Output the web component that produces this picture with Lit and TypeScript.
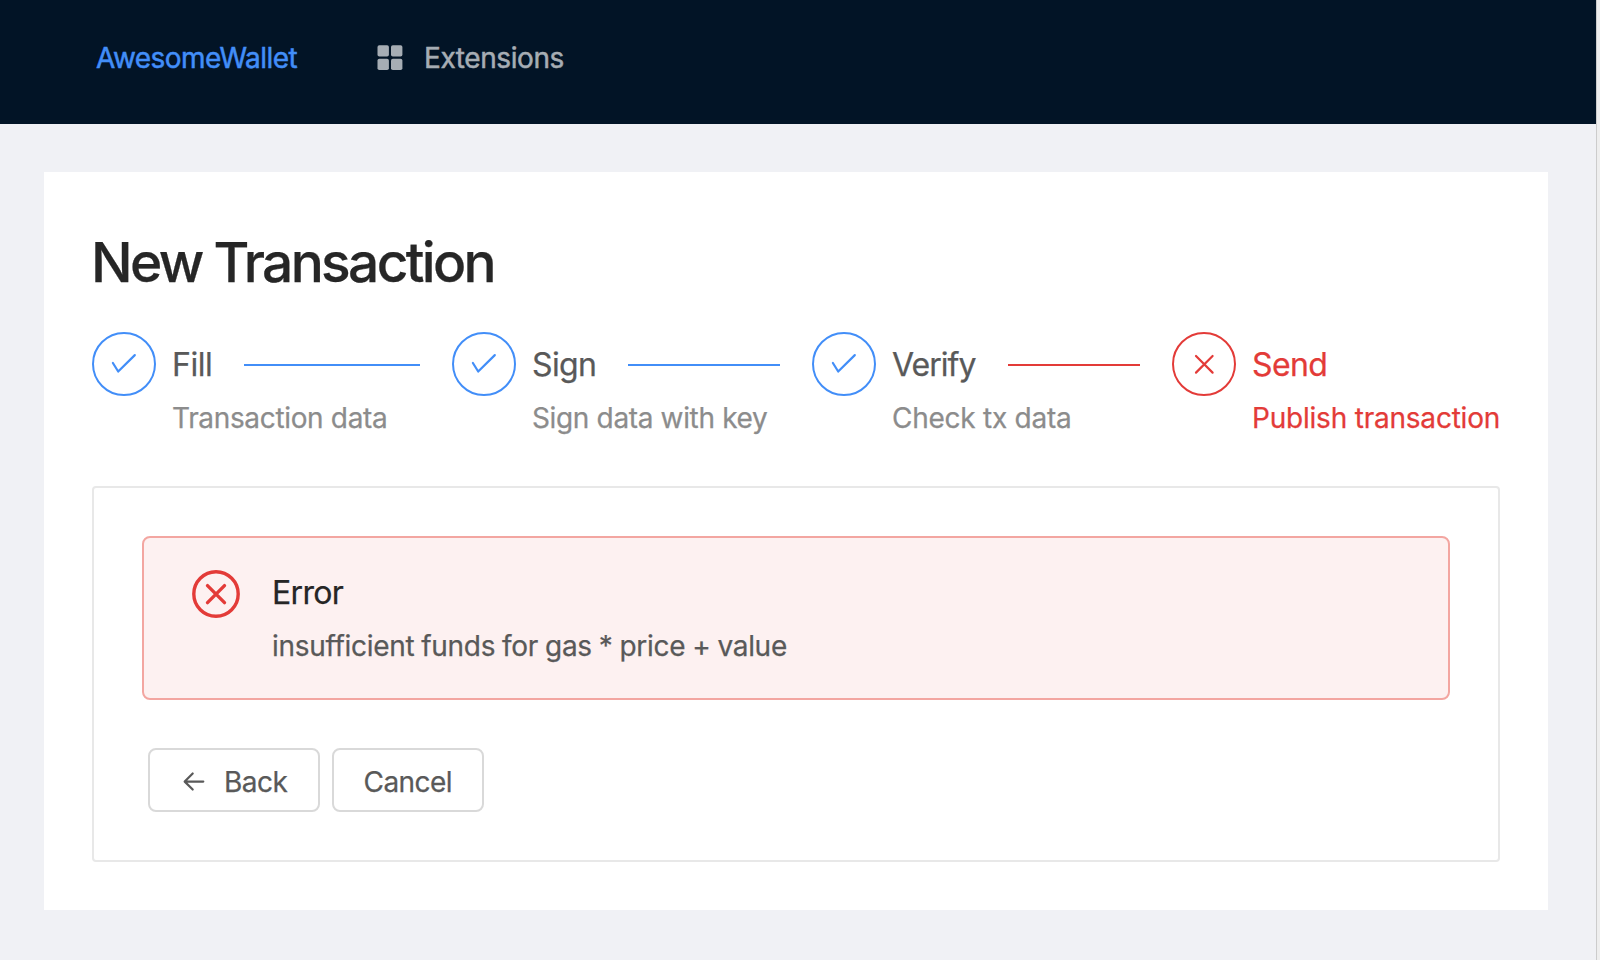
import { LitElement, html, css, svg } from "lit";
import { customElement } from "lit/decorators.js";
import { classMap } from "lit/directives/class-map.js";

interface Step {
  title: string;
  text: string;
  name: string;
  status: "finish" | "error";
  next?: "finish" | "error";
}

const steps: Step[] = [
  { title: "Fill", text: "Transaction data", name: "fill", status: "finish", next: "finish" },
  { title: "Sign", text: "Sign data with key", name: "sign", status: "finish", next: "finish" },
  { title: "Verify", text: "Check tx data", name: "verify", status: "finish", next: "error" },
  { title: "Send", text: "Publish transaction", name: "send", status: "error" },
];

const check = svg`<path d="M20.9 31 L26.2 39.5 L42.8 23.1" />`;
const cross = svg`<path d="M24 24 L40.6 40.6 M40.6 24 L24 40.6" />`;

@customElement("wallet-steps")
export class WalletSteps extends LitElement {
  static styles = css`
    :host {
      display: flex;
      height: 108px;
    }
    .step {
      display: grid;
      grid-template-columns: 64px 1fr;
      column-gap: 16px;
      grid-template-rows: 64px 44px;
      width: 328px;
      margin-right: 32px;
      flex: none;
      white-space: nowrap;
    }
    .step:last-child {
      margin-right: 0;
    }
    .finish {
      --tone: #428ef8;
    }
    .error {
      --tone: #e33b38;
    }
    .icon {
      width: 64px;
      height: 64px;
      fill: none;
      stroke: var(--tone);
      stroke-width: 2;
      display: block;
    }
    .icon path {
      stroke-width: 2.2;
      stroke-linecap: round;
      stroke-linejoin: round;
    }
    .head {
      display: flex;
      align-items: center;
      gap: 32px;
      font-size: 32px;
      line-height: 64px;
      color: #595959;
    }
    .title {
      flex: none;
      height: 64px;
      line-height: 66px;
    }
    .line {
      flex: 1;
      height: 2px;
      margin-top: 2px;
      background: var(--tone);
    }
    .text {
      grid-column: 2;
      font-size: 28px;
      line-height: 44px;
      color: #8c8c8c;
    }
    .error .head,
    .error .text {
      color: #e33b38;
    }
    .fill .title { width: 40px; letter-spacing: -0.47px; }
    .sign .title { width: 64px; letter-spacing: -0.6px; }
    .verify .title { width: 84px; letter-spacing: -0.95px; }
    .send .title { letter-spacing: -0.65px; }
    .fill .text { letter-spacing: -0.34px; }
    .sign .text { letter-spacing: -0.35px; }
    .verify .text { letter-spacing: -0.26px; }
    .send .text { letter-spacing: -0.21px; }
  `;

  render() {
    return steps.map(
      (s) => html`
        <div class=${classMap({ step: true, [s.name]: true, [s.status]: true })}>
          <svg class="icon" viewBox="0 0 64 64">
            <circle cx="32" cy="32" r="31" />
            ${s.status === "finish" ? check : cross}
          </svg>
          <div class="head">
            <span class="title">${s.title}</span>
            ${s.next ? html`<span class=${classMap({ line: true, [s.next]: true })}></span>` : null}
          </div>
          <div class="text">${s.text}</div>
        </div>
      `
    );
  }
}

@customElement("app-root")
export class AppRoot extends LitElement {
  static styles = css`
    :host {
      display: block;
      box-sizing: border-box;
      width: 1600px;
      height: 960px;
      padding-right: 3px;
      background: #eeeeee;
      overflow: hidden;
      font-family: Inter, "Liberation Sans", sans-serif;
      font-size: 28px;
      white-space: nowrap;
      -webkit-text-stroke: 0.25px currentColor;
    }
    .page {
      box-sizing: border-box;
      height: 960px;
      background: #f0f1f5;
      border-right: 1px solid #cccccc;
    }
    .bar {
      display: flex;
      box-sizing: border-box;
      height: 124px;
      padding: 26px 0 0 96px;
      background: #021426;
      line-height: 64px;
      -webkit-text-stroke: 0.5px currentColor;
    }
    .brand {
      width: 281px;
      color: #428ef8;
      letter-spacing: -0.53px;
    }
    .menu {
      display: flex;
      color: #a6adb4;
      letter-spacing: -0.41px;
    }
    .grid {
      width: 26px;
      height: 26px;
      margin: 19px 21px 0 0;
      fill: #a6adb4;
    }
    .card {
      box-sizing: border-box;
      width: 1504px;
      height: 738px;
      margin: 48px 0 0 44px;
      padding: 52px 48px 48px;
      background: #ffffff;
    }
    h1 {
      margin: 0 0 32px -1px;
      height: 76px;
      font-size: 55px;
      font-weight: 500;
      line-height: 76px;
      letter-spacing: -2.66px;
      color: #262626;
    }
    .panel {
      box-sizing: border-box;
      height: 376px;
      margin-top: 46px;
      padding: 48px;
      border: 2px solid #e8e8e8;
      border-radius: 4px;
    }
    .alert {
      display: flex;
      gap: 32px;
      box-sizing: border-box;
      height: 164px;
      padding: 30px 48px;
      border: 2px solid #f3a6a1;
      border-radius: 8px;
      background: #fdf1f1;
    }
    .sign {
      width: 48px;
      height: 48px;
      margin-top: 2px;
      fill: none;
      stroke: #e33b38;
      stroke-width: 3.4;
      stroke-linecap: round;
    }
    .label {
      height: 48px;
      margin-bottom: 8px;
      font-size: 32px;
      line-height: 50px;
      letter-spacing: -0.7px;
      color: #262626;
    }
    .detail {
      line-height: 44px;
      letter-spacing: -0.3px;
      word-spacing: -0.6px;
      color: #595959;
    }
    .actions {
      display: flex;
      gap: 12px;
      margin: 48px 0 0 6px;
    }
    button {
      display: flex;
      box-sizing: border-box;
      height: 64px;
      padding: 0;
      border: 2px solid #d9d9d9;
      border-radius: 8px;
      background: #ffffff;
      color: #595959;
      font: inherit;
      line-height: 64px;
      align-items: flex-start;
      justify-content: flex-start;
    }
    .back {
      width: 172px;
      padding-left: 32px;
      letter-spacing: -0.5px;
    }
    .cancel {
      width: 152px;
      padding-left: 29.5px;
      letter-spacing: -0.54px;
    }
    .arrow {
      width: 24px;
      height: 24px;
      margin: 19px 18px 0 0;
      fill: none;
      stroke: #595959;
      stroke-width: 2.2;
      stroke-linecap: round;
      stroke-linejoin: round;
    }
  `;

  render() {
    return html`
      <div class="page">
        <header class="bar">
          <div class="brand">AwesomeWallet</div>
          <div class="menu">
            <svg class="grid" viewBox="0 0 26 26">
              <rect x="0.5" y="0.2" width="11.4" height="11.3" rx="1.8" />
              <rect x="14" y="0.2" width="11.4" height="11.3" rx="1.8" />
              <rect x="0.5" y="13.7" width="11.4" height="11.3" rx="1.8" />
              <rect x="14" y="13.7" width="11.4" height="11.3" rx="1.8" />
            </svg>
            <span>Extensions</span>
          </div>
        </header>
        <main class="card">
          <h1>New Transaction</h1>
          <wallet-steps></wallet-steps>
          <section class="panel">
            <div class="alert">
              <svg class="sign" viewBox="0 0 48 48">
                <circle cx="24" cy="24" r="22.2" />
                <path d="M15.5 15.6 L32.5 32.6 M32.5 15.6 L15.5 32.6" />
              </svg>
              <div>
                <div class="label">Error</div>
                <div class="detail">insufficient funds for gas * price + value</div>
              </div>
            </div>
            <div class="actions">
              <button class="back">
                <svg class="arrow" viewBox="0 0 24 24">
                  <path d="M2.7 12.6 H21.3 M10.7 4.5 L2.7 12.6 L10.7 20.5" />
                </svg>
                <span>Back</span>
              </button>
              <button class="cancel">Cancel</button>
            </div>
          </section>
        </main>
      </div>
    `;
  }
}
